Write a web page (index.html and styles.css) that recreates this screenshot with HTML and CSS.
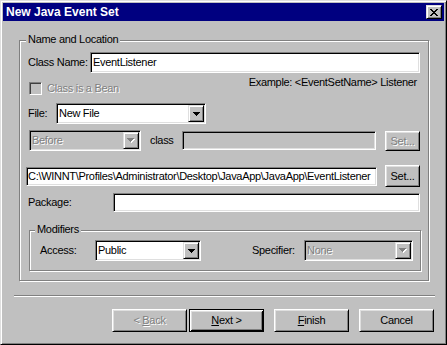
FILE: index.html
```html
<!DOCTYPE html>
<html>
<head>
<meta charset="utf-8">
<title>New Java Event Set</title>
<link rel="stylesheet" href="styles.css">
</head>
<body>
<div class="win">
  <div class="titlebar">
    <span class="title">New Java Event Set</span>
    <span class="close"><svg width="8" height="7" viewBox="0 0 8 7" shape-rendering="crispEdges"><path fill="#000" d="M0 0h2v1H0z M6 0h2v1H6z M1 1h2v1H1z M5 1h2v1H5z M2 2h4v1H2z M3 3h2v1H3z M2 4h4v1H2z M1 5h2v1H1z M5 5h2v1H5z M0 6h2v1H0z M6 6h2v1H6z"/></svg></span>
  </div>
  <div class="content">
    <div class="group outer">
      <div class="legend">Name and Location</div>

      <div class="row r-class">
        <span class="lbl w-classname">Class Name:</span>
        <div class="field grow">EventListener</div>
      </div>

      <div class="row r-bean">
        <div class="check disabled"><span class="box"></span><span class="cap">Class is a Bean</span></div>
        <div class="example">Example: &lt;EventSetName&gt; Listener</div>
      </div>

      <div class="row r-file">
        <span class="lbl w-file">File:</span>
        <div class="combo w-filecombo"><span class="val">New File</span><span class="dd"><svg width="7" height="4" viewBox="0 0 7 4" shape-rendering="crispEdges"><path fill="#000" d="M0 0h7v1H0z M1 1h5v1H1z M2 2h3v1H2z M3 3h1v1H3z"/></svg></span></div>
      </div>

      <div class="row r-before">
        <div class="combo dis w-before"><span class="val">Before</span><span class="dd"><svg width="8" height="5" viewBox="0 0 8 5" shape-rendering="crispEdges"><path fill="#fff" d="M1 1h7v1H1z M2 2h5v1H2z M3 3h3v1H3z M4 4h1v1H4z"/><path fill="#808080" d="M0 0h7v1H0z M1 1h5v1H1z M2 2h3v1H2z M3 3h1v1H3z"/></svg></span></div>
        <span class="lbl w-classlbl">class</span>
        <div class="field dis w-classfield"></div>
        <div class="btn dis w-set set1">Set...</div>
      </div>

      <div class="row r-path">
        <div class="field w-path">C:\WINNT\Profiles\Administrator\Desktop\JavaApp\JavaApp\EventListener</div>
        <div class="btn w-set set2">Set...</div>
      </div>

      <div class="row r-package">
        <span class="lbl w-package">Package:</span>
        <div class="field grow pkg"></div>
      </div>

      <div class="group mods">
        <div class="legend">Modifiers</div>
        <div class="row r-access">
          <span class="lbl w-access">Access:</span>
          <div class="combo w-accesscombo"><span class="val">Public</span><span class="dd"><svg width="7" height="4" viewBox="0 0 7 4" shape-rendering="crispEdges"><path fill="#000" d="M0 0h7v1H0z M1 1h5v1H1z M2 2h3v1H2z M3 3h1v1H3z"/></svg></span></div>
          <span class="lbl w-spec">Specifier:</span>
          <div class="combo dis w-speccombo"><span class="val">None</span><span class="dd"><svg width="8" height="5" viewBox="0 0 8 5" shape-rendering="crispEdges"><path fill="#fff" d="M1 1h7v1H1z M2 2h5v1H2z M3 3h3v1H3z M4 4h1v1H4z"/><path fill="#808080" d="M0 0h7v1H0z M1 1h5v1H1z M2 2h3v1H2z M3 3h1v1H3z"/></svg></span></div>
        </div>
      </div>
    </div>

    <div class="sep"></div>

    <div class="buttons">
      <div class="btn dis pb">&lt; <u>B</u>ack</div>
      <div class="btn def pb b-next"><u>N</u>ext &gt;</div>
      <div class="btn pb b-gap"><u>F</u>inish</div>
      <div class="btn pb b-gap">Cancel</div>
    </div>
  </div>
</div>
</body>
</html>
```

FILE: styles.css
```css
:root {
  --face: #c0c0c0;
  --light: #dfdfdf;
  --shadow: #808080;
}

html, body {
  margin: 0;
  padding: 0;
  background: var(--face);
}

body {
  font-family: "Liberation Sans", Arial, sans-serif;
  font-size: 11px;
  letter-spacing: -0.3px;
  color: #000;
}

.win {
  width: 447px;
  height: 345px;
  box-sizing: border-box;
  border: 1px solid;
  border-color: var(--light) #000 #000 var(--light);
  padding: 2px;
  box-shadow: inset 1px 1px #fff, inset -1px -1px var(--shadow);
  background: var(--face);
  display: flex;
  flex-direction: column;
}

.titlebar {
  height: 18px;
  flex: none;
  background: #000080;
  color: #fff;
  display: flex;
  align-items: center;
  justify-content: space-between;
  padding: 0 2px 0 3px;
}

.title {
  font-weight: bold;
  font-size: 12px;
  letter-spacing: 0;
  line-height: 18px;
}

.close {
  width: 16px;
  height: 14px;
  box-sizing: border-box;
  background: var(--face);
  border: 1px solid;
  border-color: var(--light) #000 #000 var(--light);
  box-shadow: inset 1px 1px #fff, inset -1px -1px var(--shadow);
  display: flex;
  align-items: center;
  justify-content: center;
}

.close svg { display: block; }

.content {
  flex: 1;
  display: flex;
  flex-direction: column;
}

.group {
  box-sizing: border-box;
  border: 1px solid var(--shadow);
  box-shadow: inset 1px 1px #fff, 1px 1px #fff;
  display: flex;
  flex-direction: column;
}

.outer {
  margin: 19px 0 0 16px;
  width: 410px;
  height: 241px;
  padding: 0 8px;
}

.legend {
  align-self: flex-start;
  background: var(--face);
  line-height: 13px;
  padding: 0 2px;
  margin: -8px 0 0 -2px;
}

.row {
  display: flex;
  align-items: center;
}

.lbl {
  flex: none;
  line-height: 21px;
  white-space: nowrap;
}

.grow { flex: 1; }

.field {
  box-sizing: border-box;
  height: 21px;
  background: #fff;
  border: 1px solid;
  border-color: var(--shadow) #fff #fff var(--shadow);
  box-shadow: inset 1px 1px #000, inset -1px -1px var(--light);
  padding: 0 2px;
  line-height: 19px;
  white-space: nowrap;
  overflow: hidden;
}

.field.dis { background: var(--face); }

.combo {
  box-sizing: border-box;
  height: 21px;
  background: #fff;
  border: 1px solid;
  border-color: var(--shadow) #fff #fff var(--shadow);
  box-shadow: inset 1px 1px #000, inset -1px -1px var(--light);
  padding: 1px;
  display: flex;
  flex: none;
}

.combo .val {
  flex: 1;
  padding-left: 1px;
  line-height: 17px;
  white-space: nowrap;
  overflow: hidden;
}

.combo .dd {
  width: 16px;
  box-sizing: border-box;
  background: var(--face);
  border: 1px solid;
  border-color: var(--light) #000 #000 var(--light);
  box-shadow: inset 1px 1px #fff, inset -1px -1px var(--shadow);
  display: flex;
  align-items: center;
  justify-content: center;
}

.combo .dd svg { display: block; }

.combo.dis { background: var(--face); }
.combo.dis .val,
.dis,
.check.disabled .cap {
  color: var(--shadow);
  text-shadow: 1px 1px #fff;
}

.btn {
  box-sizing: border-box;
  background: var(--face);
  border: 1px solid;
  border-color: #fff #000 #000 #fff;
  box-shadow: inset 1px 1px var(--light), inset -1px -1px var(--shadow);
  text-align: center;
  white-space: nowrap;
  flex: none;
}

.btn.def {
  border-color: #000;
  box-shadow: inset 1px 1px #fff, inset -1px -1px #000, inset 2px 2px var(--light), inset -2px -2px var(--shadow);
}

/* row: Class Name */
.r-class { margin-top: 6px; }
.w-classname { width: 62px; }

/* row: bean + example */
.r-bean {
  margin-top: 3px;
  align-items: flex-start;
  justify-content: space-between;
}

.check {
  display: flex;
  align-items: center;
  margin: 6px 0 0 1px;
}

.check .box {
  width: 13px;
  height: 13px;
  box-sizing: border-box;
  border: 1px solid;
  border-color: var(--shadow) #fff #fff var(--shadow);
  box-shadow: inset 1px 1px #404040;
  margin-right: 5px;
}

.check .cap { line-height: 13px; }

.example {
  line-height: 13px;
  margin-right: 3px;
}

/* row: File */
.r-file { margin-top: 8px; }
.w-file { width: 28px; }
.w-filecombo { width: 150px; }

/* row: Before / class / Set */
.r-before { margin-top: 6px; align-items: flex-start; }
.w-before { width: 112px; margin-left: 1px; }
.w-classlbl { width: 32px; margin-left: 9px; }
.w-classfield { width: 194px; height: 19px; margin-top: 1px; }
.w-set { width: 35px; }
.set1 { height: 20px; line-height: 18px; margin: 1px 0 0 9px; }

/* row: path */
.r-path { margin-top: 14px; align-items: flex-start; }
.w-path { width: 351px; height: 19px; line-height: 17px; margin: 2px 0 0 -2px; padding: 0 0 0 1px; text-overflow: clip; }
.set2 { height: 22px; line-height: 20px; margin-left: 8px; }

/* row: package */
.r-package { margin-top: 5px; }
.w-package { width: 85px; }
.pkg { height: 19px; }

/* modifiers group */
.mods {
  margin: 17px 0 0 1px;
  width: 392px;
  height: 41px;
  padding: 0 0 0 10px;
  flex: none;
}

.mods .legend { margin-left: -5px; }

.r-access { margin-top: 4px; }
.w-access { width: 55px; }
.w-accesscombo { width: 106px; }
.w-spec { width: 52px; margin-left: 51px; }
.w-speccombo { width: 109px; }

/* separator */
.sep {
  margin: 14px 0 0 11px;
  width: 421px;
  height: 0;
  border-top: 1px solid var(--shadow);
  border-bottom: 1px solid #fff;
}

/* buttons */
.buttons {
  margin-top: 12px;
  display: flex;
  justify-content: flex-end;
  padding-right: 10px;
}

.pb {
  width: 75px;
  height: 23px;
  line-height: 21px;
}

.b-next { margin-left: 2px; }
.b-gap { margin-left: 10px; }
```
